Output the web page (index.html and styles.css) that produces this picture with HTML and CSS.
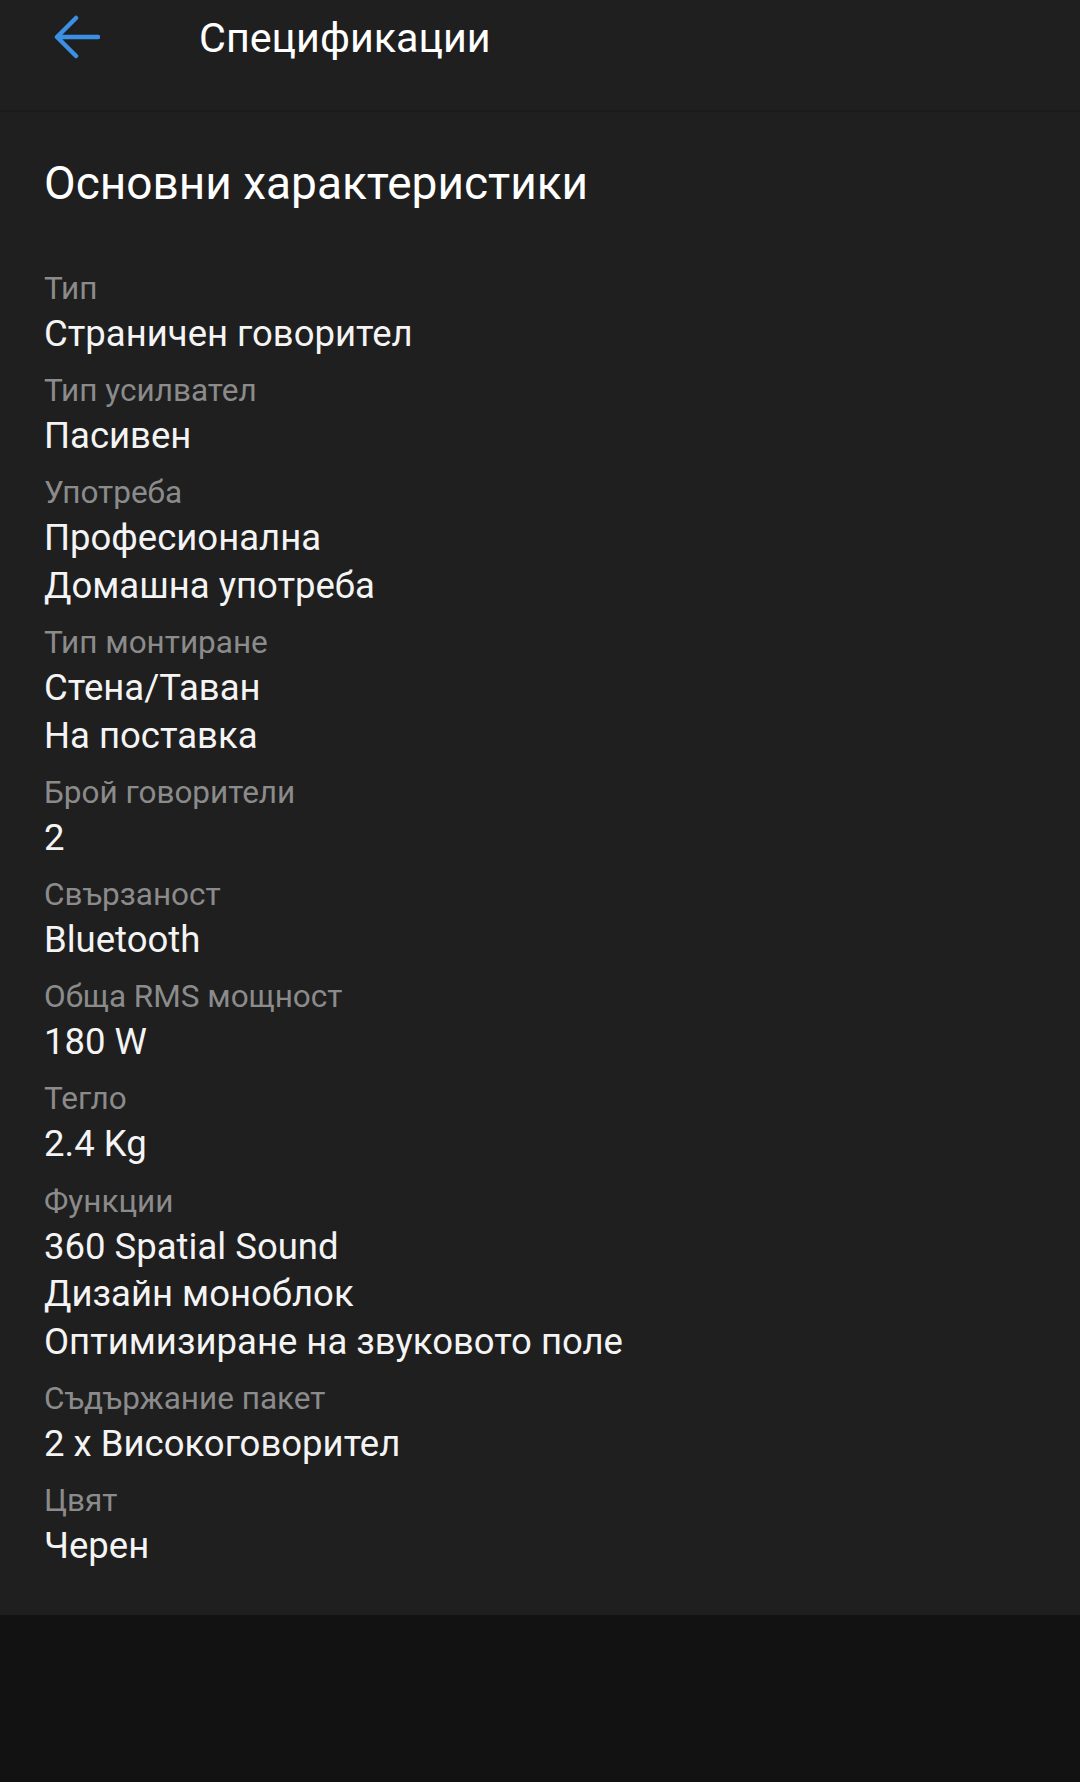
FILE: index.html
```html
<!DOCTYPE html>
<html lang="bg">
<head>
<meta charset="UTF-8">
<meta name="viewport" content="width=device-width, initial-scale=1.0">
<title>Спецификации</title>
<link rel="stylesheet" href="styles.css">
</head>
<body>
<header class="appbar">
    <button class="back" type="button" aria-label="Назад">
        <svg width="46" height="44" viewBox="0 0 46 44">
            <path d="M44 22H4M22 3L3 22L22 41" fill="none" stroke="#3b8fe4" stroke-width="4.5" stroke-linecap="round" stroke-linejoin="round"/>
        </svg>
    </button>
    <h1 class="appbar-title">Спецификации</h1>
</header>

<main class="card">
    <h2 class="section-title">Основни характеристики</h2>
    <dl class="specs">
        <div class="spec">
            <dt>Тип</dt>
            <dd>Страничен говорител</dd>
        </div>
        <div class="spec">
            <dt>Тип усилвател</dt>
            <dd>Пасивен</dd>
        </div>
        <div class="spec">
            <dt>Употреба</dt>
            <dd>Професионална</dd>
            <dd>Домашна употреба</dd>
        </div>
        <div class="spec">
            <dt>Тип монтиране</dt>
            <dd>Стена/Таван</dd>
            <dd>На поставка</dd>
        </div>
        <div class="spec">
            <dt>Брой говорители</dt>
            <dd>2</dd>
        </div>
        <div class="spec">
            <dt>Свързаност</dt>
            <dd>Bluetooth</dd>
        </div>
        <div class="spec">
            <dt>Обща RMS мощност</dt>
            <dd>180 W</dd>
        </div>
        <div class="spec">
            <dt>Тегло</dt>
            <dd>2.4 Kg</dd>
        </div>
        <div class="spec">
            <dt>Функции</dt>
            <dd>360 Spatial Sound</dd>
            <dd>Дизайн моноблок</dd>
            <dd>Оптимизиране на звуковото поле</dd>
        </div>
        <div class="spec">
            <dt>Съдържание пакет</dt>
            <dd>2 x Високоговорител</dd>
        </div>
        <div class="spec">
            <dt>Цвят</dt>
            <dd>Черен</dd>
        </div>
    </dl>
</main>
</body>
</html>
```

FILE: styles.css
```css
body {
    font-family: Roboto, "Noto Sans", sans-serif;
    background-color: #121212;
    color: #f2f2f2;
    margin: 0;
    padding: 0;
}

.appbar {
    display: flex;
    align-items: center;
    height: 110px;
    background-color: #1f1f1f;
    border-bottom: 2px solid #1b1b1b;
}

.back {
    display: flex;
    align-items: center;
    background: none;
    border: none;
    padding: 0;
    margin-left: 54px;
    margin-top: -36px;
    width: 46px;
    height: 44px;
    cursor: pointer;
}

.appbar-title {
    margin: 0 0 0 99px;
    margin-top: -35px;
    font-size: 41.3px;
    font-weight: 400;
    color: #ffffff;
}

.card {
    background-color: #1f1f1f;
    padding: 41px 44px 34px;
}

.section-title {
    margin: 0 0 54px;
    font-size: 46px;
    line-height: 60px;
    font-weight: 400;
    color: #ffffff;
}

.specs {
    margin: 0;
}

.spec {
    margin-bottom: 11.7px;
}

.spec dt {
    font-size: 31.5px;
    line-height: 43px;
    color: #8b8b8b;
}

.spec dd {
    margin: 0;
    font-size: 36.5px;
    line-height: 47.5px;
    color: #f4f4f4;
}
```
